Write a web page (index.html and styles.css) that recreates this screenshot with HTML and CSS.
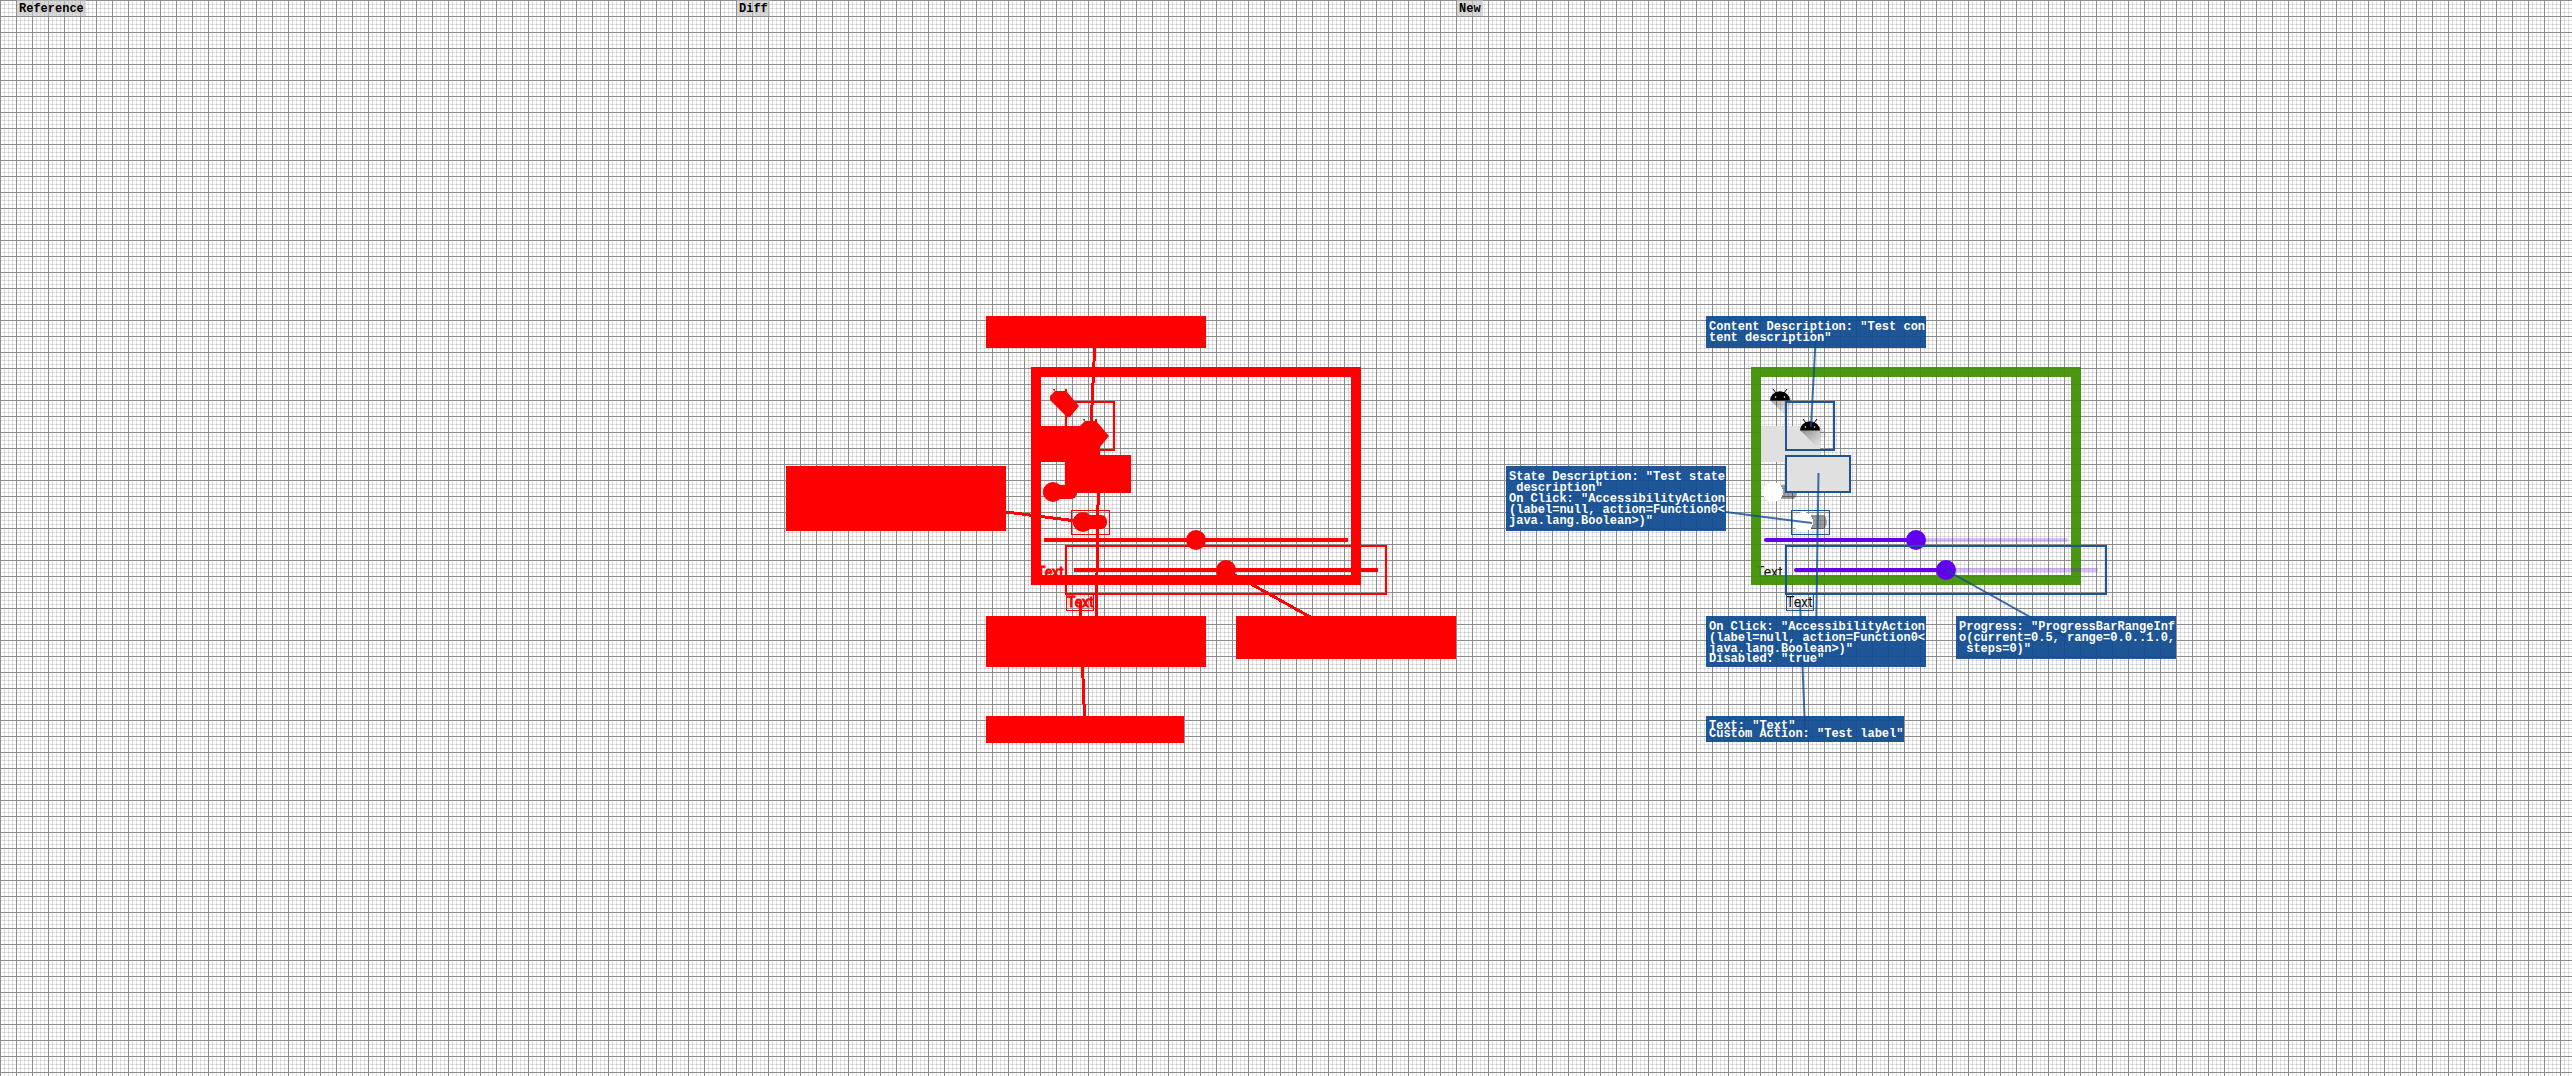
FILE: index.html
```html
<!DOCTYPE html>
<html lang="en">
<head>
<meta charset="utf-8">
<title>Screenshot comparison</title>
<link rel="stylesheet" href="styles.css">
</head>
<body>
<main class="compare">
  <section class="panel">
    <h2 class="panel-title">Reference</h2>
  </section>

  <section class="panel">
    <h2 class="panel-title">Diff</h2>
    <svg class="layer" width="740" height="1000" fill="#f00" stroke="none" aria-label="Changed pixels">
      <g fill="none" stroke="#f00">
        <rect x="316" y="372" width="320" height="208" stroke-width="10"/>
        <rect x="346" y="402" width="48" height="48" stroke-width="2"/>
        <rect x="346" y="546" width="320" height="48" stroke-width="2"/>
        <rect x="351.500" y="510.500" width="38" height="24"/>
        <rect x="346.500" y="594.500" width="27" height="16"/>
        <g stroke-width="3" shape-rendering="crispEdges">
          <path d="M375 340L371 427M378.500 473L376 641M286 512L372 523M360 602L365 729M506 570L626 637"/>
        </g>
      </g>
      <path id="blob" d="M333 389h2v2h10v-2h2v3l12 14-9 11h-3l-17-17v-4l5-5-2-1z"/>
      <use href="#blob" x="30" y="30"/>
      <path d="M321 426h59v36h-59zM345 455h66v38h-66zM324 538h304v4H324zM354 568h304v4H354z"/>
      <circle cx="333" cy="492" r="10"/><rect x="323" y="485" width="34" height="14" rx="6"/>
      <circle cx="363" cy="522" r="10"/><rect x="353" y="515" width="34" height="14" rx="6"/>
      <circle cx="476" cy="540" r="10"/><circle cx="506" cy="570" r="10"/>
      <path d="M266 316h220v32H266zM66 466h220v65H66zM266 616h220v51H266zM516 616h220v43H516zM266 716h198v27H266z"/>
      <g class="diff-text"><text x="317" y="577">Text</text><text x="347" y="607">Text</text></g>
    </svg>
  </section>

  <section class="panel">
    <h2 class="panel-title">New</h2>
    <svg class="layer" width="720" height="1000" aria-hidden="true">
      <defs>
        <linearGradient id="shade" gradientUnits="userSpaceOnUse" x1="336" y1="396" x2="352" y2="412">
          <stop offset="0" stop-color="#000" stop-opacity=".35"/>
          <stop offset="1" stop-color="#000" stop-opacity="0"/>
        </linearGradient>
        <g id="robot">
          <path fill="url(#shade)" d="M330 400l17 17h3l9-11-15-14z"/>
          <path d="M330 400.500a10 9.300 0 0 1 20 0z"/>
          <path d="M333 389l3 4M347 389l-3 4" stroke="#000" fill="none"/>
          <circle cx="335.500" cy="397" r=".8" fill="#fff"/><circle cx="344.500" cy="397" r=".8" fill="#fff"/>
        </g>
      </defs>
      <use href="#robot"/>
    </svg>
    <button class="gray-button first" disabled aria-label="Button"></button>
    <input class="switch switch-one" type="checkbox" aria-label="Switch">
    <input class="slider slider-one" type="range" min="0" max="1" step="0.1" value="0.5" aria-label="Slider">
    <span class="sample sample-one">Text</span>
    <div class="frame"></div>
    <button class="gray-button second" disabled aria-label="Labelled button"></button>
    <input class="switch switch-two" type="checkbox" aria-label="Test state description">
    <input class="slider slider-two" type="range" min="0" max="1" step="0.1" value="0.5" aria-label="Progress">
    <span class="sample sample-two">Text</span>
    <svg class="layer" width="740" height="1000" role="img" aria-label="Test content description">
      <use href="#robot" x="30" y="30"/>
      <g fill="none" stroke="#1b5595">
        <rect x="346" y="402" width="48" height="48" stroke-width="2"/>
        <rect x="346" y="546" width="320" height="48" stroke-width="2"/>
        <rect x="351.500" y="510.500" width="38" height="24"/>
        <rect x="346.500" y="594.500" width="27" height="16"/>
      </g>
      <path class="leader" d="M376 332L371 427M378.500 473L376 641M176 498L372 523M360 602L365 729M506 570L626 637"/>
    </svg>

    <div class="note note-content"><p>Content Description: "Test con</p><p>tent description"</p></div>
    <div class="note note-state"><p>State Description: "Test state</p><p> description"</p><p>On Click: "AccessibilityAction</p><p>(label=null, action=Function0&lt;</p><p>java.lang.Boolean&gt;)"</p></div>
    <div class="note note-click"><p>On Click: "AccessibilityAction</p><p>(label=null, action=Function0&lt;</p><p>java.lang.Boolean&gt;)"</p><p class="short">Disabled: "true"</p></div>
    <div class="note note-progress"><p>Progress: "ProgressBarRangeInf</p><p>o(current=0.5, range=0.0..1.0,</p><p> steps=0)"</p></div>
    <div class="note note-text"><p class="short">Text: "Text"</p><p class="short">Custom Action: "Test label"</p></div>
  </section>
</main>
</body>
</html>
```
FILE: styles.css
```css
* { box-sizing: border-box; }

body {
  margin: 0;
  background-color: #fff;
  background-image:
    linear-gradient(90deg, #8c8c8c 1px, transparent 1px),
    linear-gradient(#8c8c8c 1px, transparent 1px),
    linear-gradient(90deg, rgba(0, 0, 0, .12) 1px, transparent 1px),
    linear-gradient(rgba(0, 0, 0, .12) 1px, transparent 1px);
  background-size: 16px 16px, 16px 16px, 4px 4px, 4px 4px;
}

.compare {
  display: grid;
  grid-template-columns: 720px 720px 1fr;
  min-height: 100vh;
}

.panel { position: relative; }

.panel-title {
  width: fit-content;
  margin: 0 0 0 17px;
  padding: 2px 2px 0;
  background: rgba(196, 196, 196, .65);
  color: #000;
  font: bold 12px/14px "Courier New", "Liberation Mono", monospace;
}

.layer {
  position: absolute;
  top: 0;
  left: 0;
  pointer-events: none;
}

.diff-text {
  font: 14px Roboto, sans-serif;
  stroke: #f00;
}

.frame {
  position: absolute;
  left: 311px;
  top: 367px;
  width: 330px;
  height: 218px;
  border: 10px solid rgba(64, 144, 4, .94);
}

.gray-button {
  position: absolute;
  margin: 0;
  padding: 0;
  border: 0;
  background: #e0e0e0;
}
.first { left: 321px; top: 426px; width: 59px; height: 36px; }
.second { left: 345px; top: 455px; width: 66px; height: 38px; border: 2px solid #1b5595; }

.switch {
  appearance: none;
  position: absolute;
  width: 34px;
  height: 20px;
  margin: 0;
  background:
    radial-gradient(circle at 10px 10px, #fff 10px, transparent 10px),
    linear-gradient(rgba(0, 0, 0, .38), rgba(0, 0, 0, .38)) 10px 3px / 24px 14px no-repeat;
  border-radius: 10px;
}
.switch-one { left: 323px; top: 482px; }
.switch-two { left: 353px; top: 512px; }

.slider {
  appearance: none;
  position: absolute;
  width: 304px;
  height: 20px;
  margin: 0;
  background: none;
}
.slider::-webkit-slider-runnable-track {
  height: 4px;
  border-radius: 2px;
  background: linear-gradient(90deg, #6200ee 50%, rgba(98, 0, 238, .24) 50%);
}
.slider::-webkit-slider-thumb {
  appearance: none;
  width: 20px;
  height: 20px;
  margin-top: -8px;
  border-radius: 50%;
  background: #6200ee;
}
.slider-one { left: 324px; top: 530px; }
.slider-two { left: 354px; top: 560px; }

.sample {
  position: absolute;
  color: #111;
  font: 14px/16px Roboto, sans-serif;
}
.sample-one { left: 316px; top: 564px; }
.sample-two { left: 346px; top: 594px; }

.note {
  position: absolute;
  width: 220px;
  padding: 6px 2px 4px 3px;
  background: rgba(16, 75, 144, .94);
  color: #fff;
  font: bold 12px/11px "Courier New", "Liberation Mono", monospace;
  white-space: pre;
}
.note p { margin: 0; }
.note .short { line-height: 8px; }
.note-content { left: 266px; top: 316px; }
.note-state { left: 66px; top: 466px; }
.note-click { left: 266px; top: 616px; }
.note-progress { left: 516px; top: 616px; }
.note-text { left: 266px; top: 716px; width: 198px; }

.leader {
  stroke: rgba(16, 75, 144, .8);
  stroke-width: 2;
}
```
